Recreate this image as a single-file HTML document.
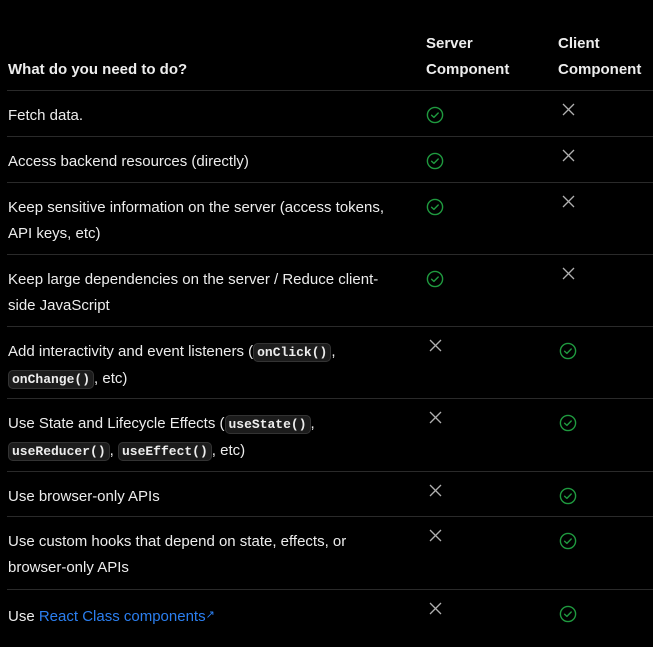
<!DOCTYPE html>
<html><head><meta charset="utf-8"><style>
html,body{margin:0;padding:0;background:#000;width:653px;height:647px;overflow:hidden}
body{font-family:"Liberation Sans",sans-serif;font-size:15px;color:#ededed;position:relative}
.b{position:absolute;left:7px;right:0;height:1px;background:#2a2a2a}
.t{position:absolute;left:8px;line-height:26px;white-space:nowrap}
.h{position:absolute;line-height:26px;font-weight:bold;white-space:nowrap;font-size:15px}
code{font-family:"Liberation Mono",monospace;font-size:13px;font-weight:bold;background:#1c1c1c;border:1px solid #333;border-radius:5px;padding:1px 3px}
svg{position:absolute}
a{color:#2b7ff0;text-decoration:none}
</style></head><body>
<div class="h" style="left:8px;top:57px">What do you need to do?</div>
<div class="h" style="left:426px;top:31px">Server<br>Component</div>
<div class="h" style="left:558px;top:31px">Client<br>Component</div>

<div class="b" style="top:90px"></div>
<div class="b" style="top:136px"></div>
<div class="b" style="top:182px"></div>
<div class="b" style="top:254px"></div>
<div class="b" style="top:326px"></div>
<div class="b" style="top:398px"></div>
<div class="b" style="top:471px"></div>
<div class="b" style="top:516px"></div>
<div class="b" style="top:589px"></div>

<div class="t" style="top:103px">Fetch data.</div>
<div class="t" style="top:149px">Access backend resources (directly)</div>
<div class="t" style="top:195px">Keep sensitive information on the server (access tokens,<br>API keys, etc)</div>
<div class="t" style="top:267px">Keep large dependencies on the server / Reduce client-<br>side JavaScript</div>
<div class="t" style="top:339px">Add interactivity and event listeners (<code>onClick()</code>,<br><code>onChange()</code>, etc)</div>
<div class="t" style="top:411px">Use State and Lifecycle Effects (<code>useState()</code>,<br><code>useReducer()</code>, <code>useEffect()</code>, etc)</div>
<div class="t" style="top:484px">Use browser-only APIs</div>
<div class="t" style="top:529px">Use custom hooks that depend on state, effects, or<br>browser-only APIs</div>
<div class="t" style="top:602px">Use <a>React Class components<span style="font-size:11px;vertical-align:3px">&#8599;</span></a></div>

<svg width="0" height="0"><defs>
<g id="ck"><circle cx="9" cy="9" r="7.6" fill="none" stroke="#1f9a3f" stroke-width="1.4"/><path d="M5.6 9.2l2.3 2.2 4.3-4.4" fill="none" stroke="#1f9a3f" stroke-width="1.4" stroke-linecap="round" stroke-linejoin="round"/></g>
<g id="x"><path d="M1 1l11 11M12 1L1 12" stroke="#b0b0b0" stroke-width="1.3"/></g>
</defs></svg>

<svg style="left:426px;top:106px" width="18" height="18"><use href="#ck"/></svg>
<svg style="left:426px;top:152px" width="18" height="18"><use href="#ck"/></svg>
<svg style="left:426px;top:198px" width="18" height="18"><use href="#ck"/></svg>
<svg style="left:426px;top:270px" width="18" height="18"><use href="#ck"/></svg>
<svg style="left:559px;top:342px" width="18" height="18"><use href="#ck"/></svg>
<svg style="left:559px;top:414px" width="18" height="18"><use href="#ck"/></svg>
<svg style="left:559px;top:487px" width="18" height="18"><use href="#ck"/></svg>
<svg style="left:559px;top:532px" width="18" height="18"><use href="#ck"/></svg>
<svg style="left:559px;top:605px" width="18" height="18"><use href="#ck"/></svg>

<svg style="left:562px;top:103px" width="13" height="13"><use href="#x"/></svg>
<svg style="left:562px;top:149px" width="13" height="13"><use href="#x"/></svg>
<svg style="left:562px;top:195px" width="13" height="13"><use href="#x"/></svg>
<svg style="left:562px;top:267px" width="13" height="13"><use href="#x"/></svg>
<svg style="left:429px;top:339px" width="13" height="13"><use href="#x"/></svg>
<svg style="left:429px;top:411px" width="13" height="13"><use href="#x"/></svg>
<svg style="left:429px;top:484px" width="13" height="13"><use href="#x"/></svg>
<svg style="left:429px;top:529px" width="13" height="13"><use href="#x"/></svg>
<svg style="left:429px;top:602px" width="13" height="13"><use href="#x"/></svg>
</body></html>
